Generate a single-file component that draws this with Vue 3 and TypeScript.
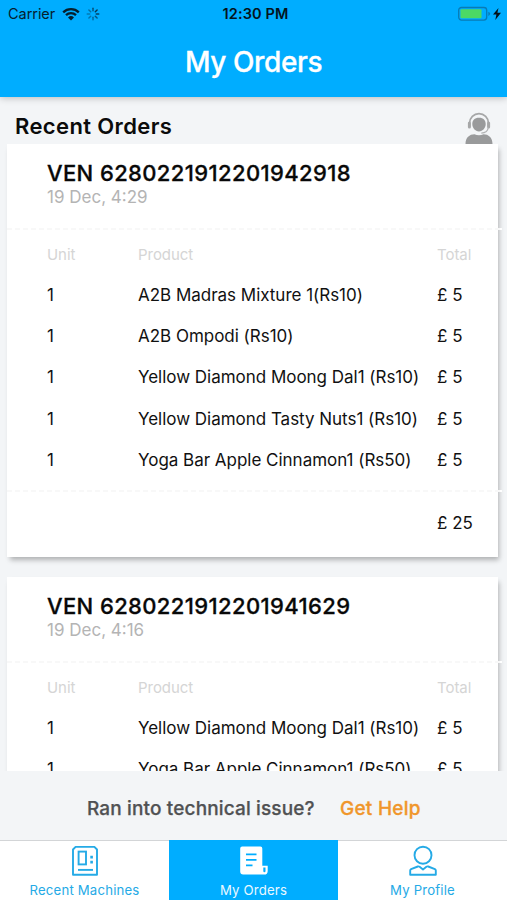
<script setup lang="ts">
interface Item {
  unit: number
  product: string
  total: number
}
interface Order {
  id: string
  date: string
  items: Item[]
  total: number
}

const orders: Order[] = [
  {
    id: '6280221912201942918',
    date: '19 Dec, 4:29',
    items: [
      { unit: 1, product: 'A2B Madras Mixture 1(Rs10)', total: 5 },
      { unit: 1, product: 'A2B Ompodi (Rs10)', total: 5 },
      { unit: 1, product: 'Yellow Diamond Moong Dal1 (Rs10)', total: 5 },
      { unit: 1, product: 'Yellow Diamond Tasty Nuts1 (Rs10)', total: 5 },
      { unit: 1, product: 'Yoga Bar Apple Cinnamon1 (Rs50)', total: 5 },
    ],
    total: 25,
  },
  {
    id: '6280221912201941629',
    date: '19 Dec, 4:16',
    items: [
      { unit: 1, product: 'Yellow Diamond Moong Dal1 (Rs10)', total: 5 },
      { unit: 1, product: 'Yoga Bar Apple Cinnamon1 (Rs50)', total: 5 },
    ],
    total: 10,
  },
]
</script>

<template>
  <div class="screen">
    <header class="header">
      <div class="status">
        <div class="status-left">
          <span class="carrier">Carrier</span>
          <svg class="wifi" width="18" height="14" viewBox="0 0 18 14">
            <g fill="none" stroke="#06202e" stroke-width="2.3">
              <path d="M1.2 5.3a11.2 11.2 0 0 1 15.6 0" />
              <path d="M4 8.2a7.2 7.2 0 0 1 10 0" />
            </g>
            <path d="M6 10.4a4.4 4.4 0 0 1 6 0L9 13.4z" fill="#06202e" />
          </svg>
          <svg class="spinner" width="14" height="14" viewBox="0 0 14 14">
            <g stroke="#06304a" stroke-width="1.4" stroke-linecap="round">
              <path d="M7 1.2v2.6" opacity=".75" />
              <path d="M11.1 2.9L9.3 4.7" opacity=".95" />
              <path d="M12.8 7h-2.6" opacity=".85" />
              <path d="M11.1 11.1L9.3 9.3" opacity=".7" />
              <path d="M7 12.8v-2.6" opacity=".55" />
              <path d="M2.9 11.1l1.8-1.8" opacity=".45" />
              <path d="M1.2 7h2.6" opacity=".4" />
              <path d="M2.9 2.9l1.8 1.8" opacity=".5" />
            </g>
          </svg>
        </div>
        <span class="clock">12:30 PM</span>
        <div class="status-right">
          <svg width="44" height="16" viewBox="0 0 44 16">
            <rect x=".7" y="1.5" width="28" height="12.6" rx="2.8" fill="none" stroke="#087bb5" stroke-width="1.3" />
            <rect x="2.5" y="3.3" width="21" height="9" rx="1" fill="#4cd964" />
            <path d="M30.300 5.700q1.800.6 1.800 2.100t-1.800 2.100z" fill="#087bb5" />
            <path d="M40.500 2L35 8.600h3.400L37.300 14l5.700-7.200h-3.600z" fill="#04121a" />
          </svg>
        </div>
      </div>
      <h1 class="title">My Orders</h1>
    </header>

    <div class="section">
      <h2 class="section-title">Recent Orders</h2>
      <svg class="support" width="28" height="32" viewBox="0 0 28 32">
        <path d="M4.6 14.5V11a9.4 9.4 0 0 1 18.8 0v3.5" fill="none" stroke="#a6a7a8" stroke-width="1.7" />
        <rect x="2.9" y="9.5" width="3" height="7" rx="1.5" fill="#a6a7a8" />
        <rect x="22.1" y="9.5" width="3" height="7" rx="1.5" fill="#a6a7a8" />
        <path d="M14 5.8c4.5 0 6.7 2.6 6.7 6.3 0 4.1-2.9 7.3-6.7 7.3s-6.7-3.2-6.7-7.3c0-3.7 2.2-6.3 6.7-6.3z" fill="#999a9b" />
        <path d="M23.3 15.5c-.5 3.5-3.2 5.4-7 5.6" fill="none" stroke="#b1b2b3" stroke-width="1.3" />
        <path d="M.5 32c0-6.4 4-9.7 9-9.7 2.6 1.3 6.4 1.3 9 0 5 0 9 3.3 9 9.7z" fill="#999a9b" />
      </svg>
    </div>

    <main class="list">
      <article v-for="order in orders" :key="order.id" class="card">
        <div class="card-head">
          <h3 class="order-id">VEN {{ order.id }}</h3>
          <p class="date">{{ order.date }}</p>
        </div>
        <div class="divider"></div>
        <div class="items">
          <div class="row labels">
            <span>Unit</span><span>Product</span><span>Total</span>
          </div>
          <div v-for="item in order.items" :key="item.product" class="row">
            <span>{{ item.unit }}</span>
            <span>{{ item.product }}</span>
            <span>£ {{ item.total }}</span>
          </div>
        </div>
        <div class="divider"></div>
        <div class="row sum"><span></span><span></span><span>£ {{ order.total }}</span></div>
      </article>
    </main>

    <div class="help">
      <span class="question">Ran into technical issue?</span>
      <a class="get-help">Get Help</a>
    </div>

    <nav class="tabs">
      <a class="tab">
        <svg width="30" height="32" viewBox="0 0 30 32" fill="none" stroke="#25aae6" stroke-width="1.9">
          <path d="M5.600 1.900h18.800l2.600 2.600v25.200H3V4.500z" stroke-linejoin="round" />
          <rect x="8.600" y="6.600" width="7.400" height="12.800" />
          <path d="M8 24.900h15" />
          <path d="M20.300 12.100h2.600M20.300 17.100h2.600" stroke-width="2.600" />
        </svg>
        <span>Recent Machines</span>
      </a>
      <a class="tab active">
        <svg width="30" height="32" viewBox="0 0 30 32">
          <path d="M3.200 1.600h18.200q1.900 0 1.900 1.900v17.200h5.400v5.200q0 3.600-3.600 3.600H4.200q-3 0-3-3V3.600q0-2 2-2z" fill="#fff" />
          <path d="M7 9.300h10.500M7 14.800h10.500M7 20.300h6.500" stroke="#00adff" stroke-width="1.800" />
          <path d="M24.300 22.600h2.200v3.300q0 1.400-1.100 1.400t-1.100-1.400z" fill="#00adff" />
        </svg>
        <span>My Orders</span>
      </a>
      <a class="tab">
        <svg width="30" height="32" viewBox="0 0 30 32" fill="none" stroke="#25aae6" stroke-width="1.9">
          <circle cx="15" cy="10.200" r="8.500" />
          <path d="M2.200 29.700v-4.100q0-.9.900-1.400l6.700-2.700q1-.3 1.800.3l3.400 2.600 3.400-2.600q.8-.6 1.800-.3l6.700 2.700q.9.500.9 1.400v4.100z" stroke-linejoin="round" />
        </svg>
        <span>My Profile</span>
      </a>
    </nav>
  </div>
</template>

<style>
body {
  margin: 0;
  background: #f3f5f7;
}
</style>

<style scoped>
.screen {
  display: flex;
  flex-direction: column;
  width: 507px;
  height: 900px;
  overflow: hidden;
  background: #f3f5f7;
  color: #111;
  font-family: Inter, 'Liberation Sans', sans-serif;
}
h1, h2, h3, p {
  margin: 0;
}
.header {
  flex: none;
  height: 97px;
  background: #00adff;
  box-shadow: 0 1px 7px rgba(0, 0, 0, 0.24);
}
.status {
  display: grid;
  grid-template-columns: 1fr auto 1fr;
  align-items: center;
  height: 27px;
  padding: 0 5px 0 8px;
  color: #06202e;
}
.status-left {
  display: flex;
  align-items: center;
}
.carrier {
  font-size: 14.5px;
  letter-spacing: -0.05px;
}
.wifi {
  margin-left: 7px;
}
.spinner {
  margin-left: 6px;
}
.clock {
  padding-left: 1px;
  font-size: 14.5px;
  font-weight: 600;
  letter-spacing: 0.1px;
  color: #04141d;
}
.status-right {
  display: flex;
  justify-content: flex-end;
}
.title {
  line-height: 70px;
  text-align: center;
  font-size: 28px;
  font-weight: 500;
  letter-spacing: -0.4px;
  color: #fff;
  -webkit-text-stroke: 0.3px #fff;
}
.section {
  flex: none;
  display: flex;
  justify-content: space-between;
  align-items: flex-end;
  height: 47px;
  padding: 0 14px 0 15px;
}
.section-title {
  line-height: 36px;
  font-size: 22px;
  font-weight: 600;
  letter-spacing: 0.38px;
  color: #0b0b0b;
}
.list {
  flex: none;
  height: 627px;
  overflow: hidden;
  padding-left: 7px;
}
.card {
  width: 491px;
  margin-bottom: 20px;
  background: #fff;
  box-shadow: 2px 4px 5px -1px rgba(0, 0, 0, 0.28);
}
.card-head {
  height: 84px;
  padding-left: 40px;
  box-sizing: border-box;
  padding-top: 15px;
}
.order-id {
  line-height: 28px;
  font-size: 22px;
  font-weight: 500;
  letter-spacing: 0.38px;
  color: #080808;
  -webkit-text-stroke: 0.3px #080808;
}
.date {
  line-height: 20px;
  font-size: 17px;
  color: #b4b4b4;
}
.divider {
  height: 2px;
  width: 495px;
  background: repeating-linear-gradient(90deg, #f8f8f8 0 5px, #fff 5px 8px);
}
.items {
  height: 260px;
  box-sizing: border-box;
  padding-top: 4px;
}
.row {
  display: grid;
  grid-template-columns: 91px 299px 1fr;
  height: 41.15px;
  padding-left: 40px;
  line-height: 40px;
  font-size: 17px;
  letter-spacing: -0.02px;
  white-space: nowrap;
}
.labels {
  line-height: 41px;
  font-size: 15px;
  letter-spacing: -0.05px;
  color: #d5d5d5;
}
.sum {
  height: 65px;
  line-height: 63px;
}
.help {
  flex: none;
  height: 69px;
  display: flex;
  align-items: center;
  padding: 5px 0 0 87px;
  box-sizing: border-box;
  font-size: 19px;
  font-weight: 500;
  letter-spacing: 0.14px;
}
.question {
  width: 253px;
  color: #505153;
  white-space: nowrap;
  -webkit-text-stroke: 0.25px #505153;
}
.get-help {
  color: #f0962b;
  letter-spacing: 0.25px;
  -webkit-text-stroke: 0.3px #f0962b;
}
.tabs {
  flex: none;
  display: grid;
  grid-template-columns: repeat(3, 1fr);
  height: 60px;
  box-sizing: border-box;
  border-top: 1px solid #d3d5d7;
  background: #fff;
}
.tab {
  display: flex;
  flex-direction: column;
  align-items: center;
  padding-top: 4px;
  font-size: 13.2px;
  letter-spacing: 0.18px;
  line-height: 26px;
  color: #25aae6;
}
.tab svg {
  flex: none;
}
.tab.active {
  margin-top: -1px;
  padding-top: 5px;
  background: #00adff;
  color: #e9f8ff;
}
</style>
